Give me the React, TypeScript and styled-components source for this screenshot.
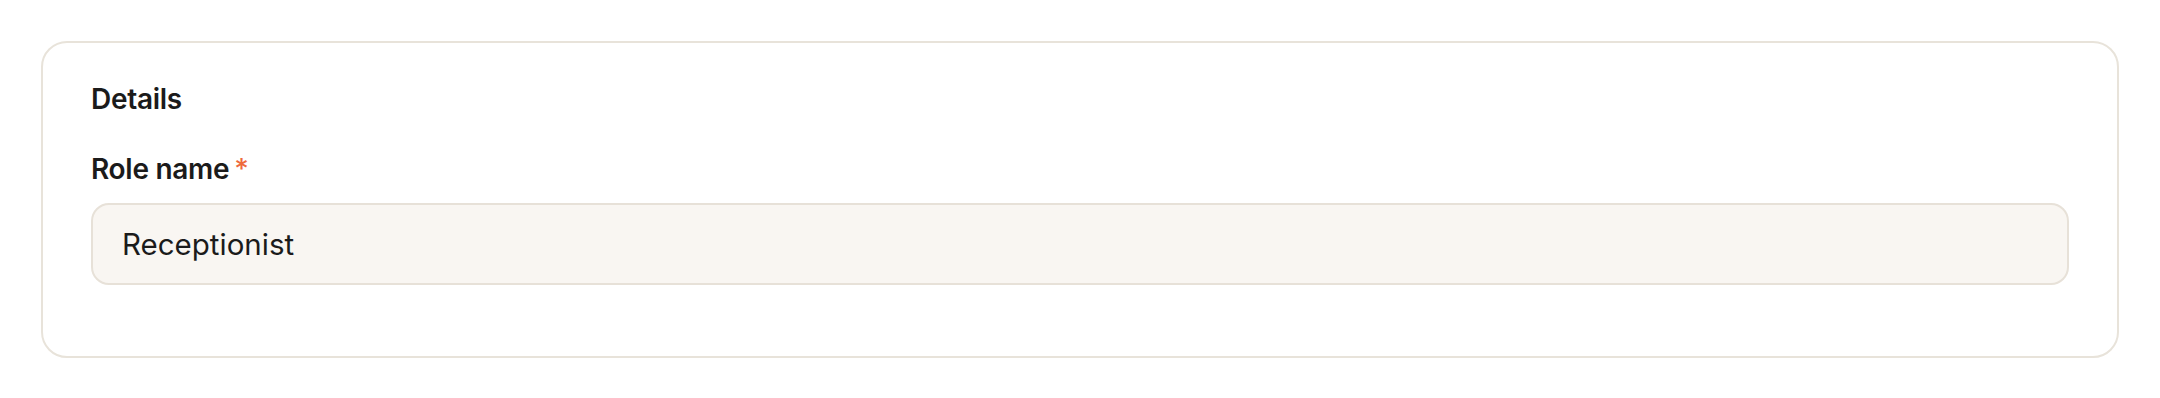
import React from "react";
import styled, { createGlobalStyle } from "styled-components";

const Global = createGlobalStyle`
  html, body { margin: 0; padding: 0; background: #ffffff; }
  body { font-family: "Inter", "DejaVu Sans", sans-serif; color: #1b1b1b; }
  * { box-sizing: border-box; }
`;

const Page = styled.div`
  padding: 41px;
`;

const Card = styled.section`
  border: 2px solid #e8e3da;
  border-radius: 26px;
  padding: 38px 48px 71px;
  background: #ffffff;
  display: flex;
  flex-direction: column;
`;

const Heading = styled.h2`
  margin: 0;
  font-size: 28px;
  line-height: 36px;
  font-weight: 600;
  letter-spacing: -0.3px;
  color: #1b1b1b;
`;

const Field = styled.div`
  margin-top: 35px;
  display: flex;
  flex-direction: column;
  gap: 17px;
`;

const Label = styled.label`
  font-size: 28px;
  line-height: 34px;
  font-weight: 600;
  letter-spacing: -0.3px;
  color: #1b1b1b;
  display: flex;
  align-items: flex-start;
  gap: 5px;
`;

const Required = styled.span`
  color: #ee6a3c;
  font-weight: 500;
  font-size: 28px;
  line-height: 34px;
`;

const Input = styled.input`
  height: 82px;
  width: 100%;
  border: 2px solid #e7e1d8;
  border-radius: 18px;
  background: #f9f6f2;
  padding: 0 29px;
  font-family: "Inter", "DejaVu Sans", sans-serif;
  font-size: 29.5px;
  font-weight: 400;
  color: #1b1b1b;
  outline: none;
`;

export default function App() {
  return (
    <>
      <Global />
      <Page>
        <Card>
          <Heading>Details</Heading>
          <Field>
            <Label htmlFor="role">
              Role name<Required>*</Required>
            </Label>
            <Input id="role" defaultValue="Receptionist" />
          </Field>
        </Card>
      </Page>
    </>
  );
}
